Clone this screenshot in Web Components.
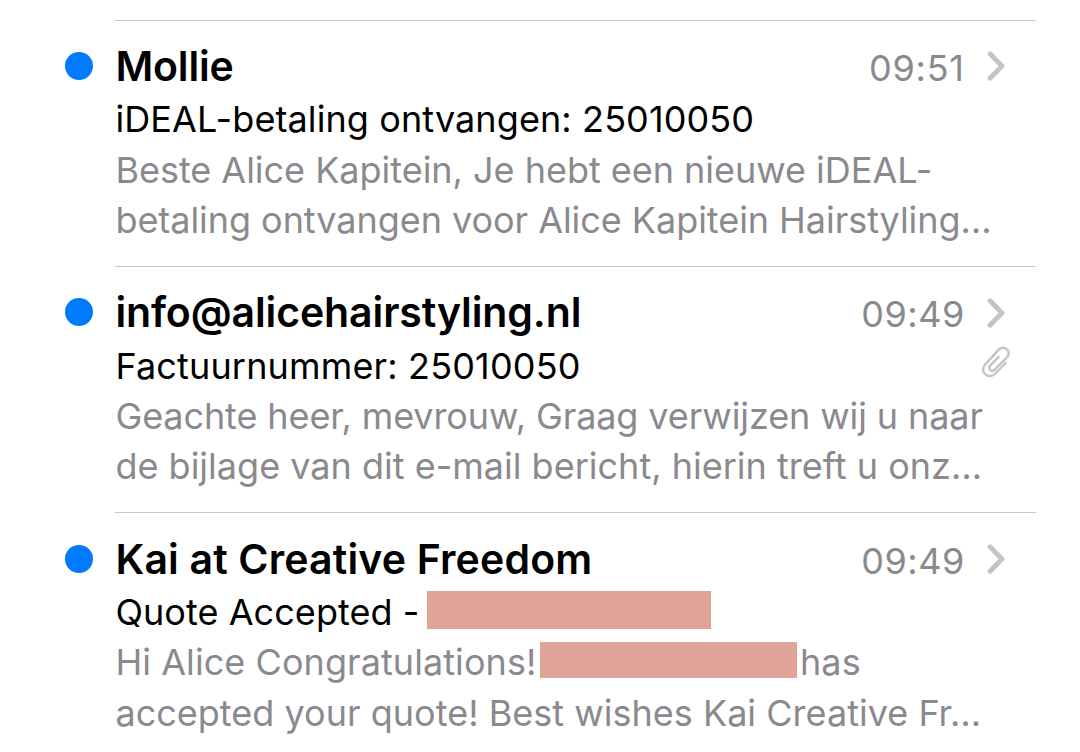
<!DOCTYPE html>
<html lang="nl">
<head>
<meta charset="utf-8">
<title>Inbox</title>
<style>
  body {
    margin: 0;
    background: #fff;
    font-family: Inter, "Liberation Sans", sans-serif;
    overflow: hidden;
  }
</style>
</head>
<body>

<mail-list>
  <mail-row time="09:51" style="--time-tracking: 0.8px">
    <mail-line slot="sender" tracking="-0.15">Mollie</mail-line>
    <mail-line slot="subject" tracking="0.1">iDEAL-betaling ontvangen: 25010050</mail-line>
    <mail-line tracking="-0.02">Beste Alice Kapitein, Je hebt een nieuwe iDEAL-</mail-line>
    <mail-line tracking="-0.045">betaling ontvangen voor Alice Kapitein Hairstyling…</mail-line>
  </mail-row>
  <mail-row time="09:49" attachment>
    <mail-line slot="sender" tracking="-0.11">info@alicehairstyling.nl</mail-line>
    <mail-line slot="subject" tracking="0.16">Factuurnummer: 25010050</mail-line>
    <mail-line tracking="-0.109">Geachte heer, mevrouw, Graag verwijzen wij u naar</mail-line>
    <mail-line tracking="0.01">de bijlage van dit e-mail bericht, hierin treft u onz…</mail-line>
  </mail-row>
  <mail-row time="09:49">
    <mail-line slot="sender" tracking="0.17">Kai at Creative Freedom</mail-line>
    <mail-line slot="subject" tracking="0.06">Quote Accepted -<mail-redaction style="width: 284px; height: 38px; margin-left: 7.4px; vertical-align: -4px"></mail-redaction></mail-line>
    <mail-line tracking="0.07">Hi Alice Congratulations!<mail-redaction style="width: 257px; height: 36px; margin: 0 3px 0 3.6px; vertical-align: -3px"></mail-redaction>has</mail-line>
    <mail-line tracking="0.02">accepted your quote! Best wishes Kai Creative Fr…</mail-line>
  </mail-row>
</mail-list>

<script>
class MailList extends HTMLElement {
  constructor() {
    super();
    this.attachShadow({ mode: "open" });
  }

  static get styles() {
    return /* css */`
      :host {
        display: flex;
        flex-direction: column;
        padding: 19.8px 44px 0 65.4px;
      }
    `;
  }

  connectedCallback() {
    this.shadowRoot.innerHTML = /* html */`
    <style>${MailList.styles}</style>
    <slot></slot>`;
  }
}

class MailLine extends HTMLElement {
  constructor() {
    super();
    this.attachShadow({ mode: "open" });
  }

  connectedCallback() {
    const tracking = this.getAttribute("tracking") || 0;
    this.shadowRoot.innerHTML = /* html */`
    <style>
      :host {
        display: block;
        white-space: nowrap;
        letter-spacing: ${tracking}px;
      }
    </style>
    <slot></slot>`;
  }
}

class MailRedaction extends HTMLElement {
  constructor() {
    super();
    this.attachShadow({ mode: "open" });
  }

  connectedCallback() {
    this.shadowRoot.innerHTML = /* html */`
    <style>
      :host {
        display: inline-block;
        background: #e0a397;
      }
    </style>`;
  }
}

class MailIcon extends HTMLElement {
  constructor() {
    super();
    this.attachShadow({ mode: "open" });
  }

  static get icons() {
    return {
      chevron: /* html */`
        <svg width="18" height="30" viewBox="0 0 18 30" stroke-width="4.8">
          <path d="M3 2.8 L15 15 L3 27.2"/>
        </svg>`,
      clip: /* html */`
        <svg width="29" height="33" viewBox="424 194 87 99" stroke-width="7.4">
          <path d="M498 248 L465 281 A20 20 0 0 1 436 253 L478 207 A16.5 16.5 0 0 1 502 231 L465 268 A9 9 0 0 1 451 256 L477 230"/>
        </svg>`
    };
  }

  connectedCallback() {
    this.shadowRoot.innerHTML = /* html */`
    <style>
      :host { display: block; }
      svg {
        display: block;
        fill: none;
        stroke: #c4c4c6;
        stroke-linecap: round;
        stroke-linejoin: round;
      }
    </style>
    ${MailIcon.icons[this.getAttribute("name")]}`;
  }
}

class MailRow extends HTMLElement {
  constructor() {
    super();
    this.attachShadow({ mode: "open" });
  }

  static get styles() {
    return /* css */`
      :host {
        display: flex;
        height: 246.3px;
        flex: none;
      }

      .unread {
        width: 28px;
        height: 28px;
        margin: 32.3px 22px 0 0;
        border-radius: 50%;
        background: #007aff;
        flex: none;
      }

      .content {
        flex: 1;
        min-width: 0;
        border-top: 1px solid #c8c8ca;
        padding-top: 19.2px;
        font-size: 36px;
        line-height: 50.3px;
      }

      .head {
        display: flex;
        align-items: baseline;
        height: 52px;
        margin-bottom: 2.4px;
        line-height: 52px;
        padding-right: 30.6px;
        color: #8a8a8e;
      }

      .sender {
        flex: 1;
        font-size: 41px;
        font-weight: 600;
        color: #000;
      }

      time {
        letter-spacing: var(--time-tracking, 0.5px);
        margin-right: 22.6px;
      }

      .head mail-icon {
        align-self: center;
        padding-top: 1px;
      }

      .subject {
        display: flex;
        justify-content: space-between;
        height: 50.3px;
        padding-right: 26.4px;
        color: #000;
      }

      .subject mail-icon {
        margin-top: 4px;
      }

      .preview {
        color: #8a8a8e;
      }
    `;
  }

  connectedCallback() {
    this.render();
  }

  render() {
    const clip = this.hasAttribute("attachment") ? `<mail-icon name="clip"></mail-icon>` : "";
    this.shadowRoot.innerHTML = /* html */`
    <style>${MailRow.styles}</style>
    <div class="unread"></div>
    <div class="content">
      <div class="head">
        <div class="sender"><slot name="sender"></slot></div>
        <time>${this.getAttribute("time")}</time>
        <mail-icon name="chevron"></mail-icon>
      </div>
      <div class="subject"><slot name="subject"></slot>${clip}</div>
      <div class="preview"><slot></slot></div>
    </div>`;
  }
}

customElements.define("mail-list", MailList);
customElements.define("mail-line", MailLine);
customElements.define("mail-redaction", MailRedaction);
customElements.define("mail-icon", MailIcon);
customElements.define("mail-row", MailRow);
</script>
</body>
</html>
